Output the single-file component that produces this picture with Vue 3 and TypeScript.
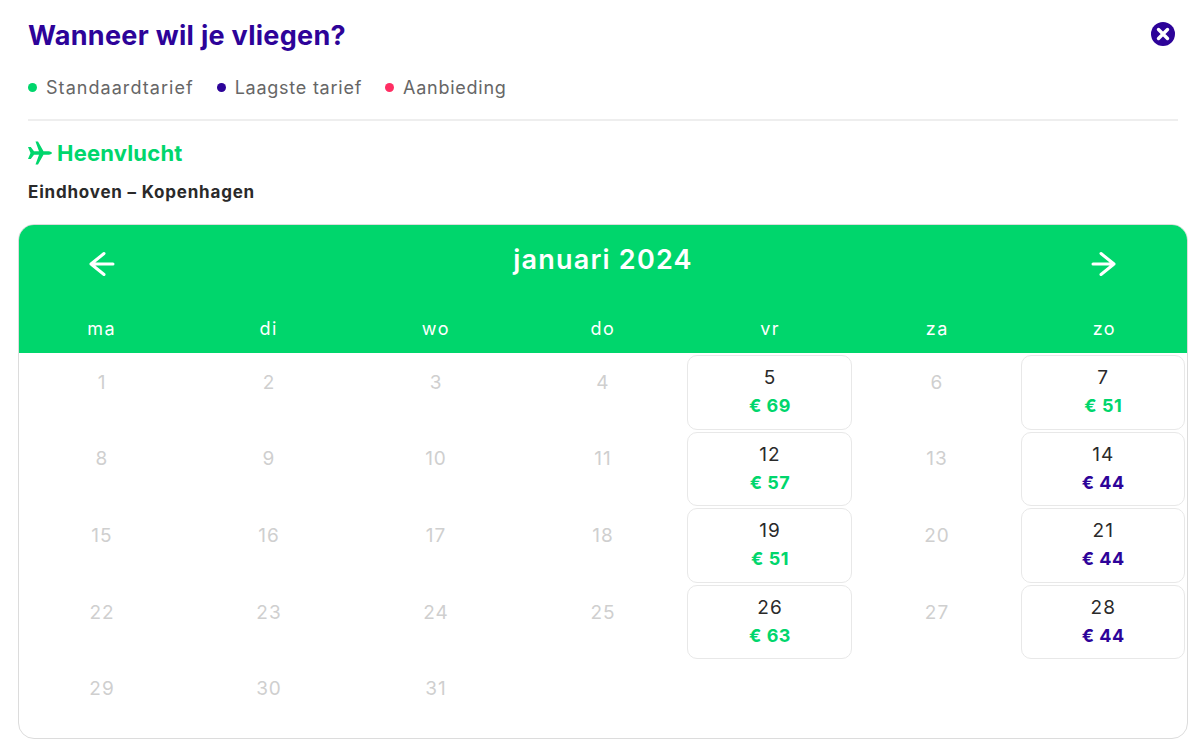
<script setup lang="ts">
interface Day {
  n: number
  price?: number
  low?: boolean
}

const weekdays = ['ma', 'di', 'wo', 'do', 'vr', 'za', 'zo']

const prices: Record<number, { price: number; low?: boolean }> = {
  5: { price: 69 },
  7: { price: 51 },
  12: { price: 57 },
  14: { price: 44, low: true },
  19: { price: 51 },
  21: { price: 44, low: true },
  26: { price: 63 },
  28: { price: 44, low: true },
}

const days: Day[] = Array.from({ length: 31 }, (_, i) => ({ n: i + 1, ...prices[i + 1] }))
</script>

<template>
  <div class="page">
    <div class="top">
      <h1>Wanneer wil je vliegen?</h1>
      <svg class="close" width="24" height="24" viewBox="0 0 24 24">
        <circle cx="12" cy="12" r="12" fill="#2d0399" />
        <path d="M7.5 7.5l9 9M16.5 7.5l-9 9" stroke="#fff" stroke-width="3.4" stroke-linecap="round" />
      </svg>
    </div>
    <div class="legend">
      <span class="item"><i class="dot green"></i>Standaardtarief</span>
      <span class="item"><i class="dot blue"></i>Laagste tarief</span>
      <span class="item"><i class="dot red"></i>Aanbieding</span>
    </div>
    <div class="direction">
      <svg width="24" height="24" viewBox="0 0 24 24" fill="#00d66c">
        <path d="M0 6 L2.800 6 L6 10.200 L11 10.200 L7.500 0.500 L10 0.500 L15.500 10.200 L21 10.200 Q24 10.800 24 12 Q24 13.200 21 13.800 L15.500 13.800 L10 23.500 L7.500 23.500 L11 13.800 L6 13.800 L2.800 18 L0 18 L2.500 12 Z" />
      </svg>
      <span>Heenvlucht</span>
    </div>
    <div class="route">Eindhoven – Kopenhagen</div>

    <div class="calendar">
      <div class="cal-head">
        <div class="month-row">
          <svg width="28" height="28" viewBox="0 0 28 28" fill="none" stroke="#fff" stroke-width="3" stroke-linecap="round" stroke-linejoin="round">
            <path d="M25 14H3M16 3.500L3 14l13 10.500" />
          </svg>
          <span class="month">januari 2024</span>
          <svg width="28" height="28" viewBox="0 0 28 28" fill="none" stroke="#fff" stroke-width="3" stroke-linecap="round" stroke-linejoin="round">
            <path d="M3 14h21M11 3.500L24 14 11 24.500" />
          </svg>
        </div>
        <div class="weekdays">
          <span v-for="w in weekdays" :key="w">{{ w }}</span>
        </div>
      </div>
      <div class="grid">
        <div v-for="d in days" :key="d.n" class="cell" :class="{ priced: d.price }">
          <span class="num">{{ d.n }}</span>
          <span v-if="d.price" class="price" :class="{ low: d.low }">€ {{ d.price }}</span>
        </div>
      </div>
    </div>
  </div>
</template>

<style scoped>
.page {
  width: 1200px;
  height: 756px;
  box-sizing: border-box;
  padding: 0 12px 0 18px;
  font-family: Inter, "Noto Sans", sans-serif;
  background: #fff;
  overflow: hidden;
}

.top {
  display: flex;
  justify-content: space-between;
  align-items: center;
  height: 71px;
  padding: 0 13px 0 10px;
}

h1 {
  margin: 0;
  font-size: 27px;
  font-weight: 700;
  letter-spacing: 0.3px;
  color: #2d0399;
}

.close {
  margin-bottom: 4px;
}

.legend {
  display: flex;
  gap: 23px;
  height: 48px;
  margin: 0 10px;
  border-bottom: 2px solid #eeeeee;
  font-size: 18px;
  letter-spacing: 0.75px;
  color: #666;
}

.item {
  display: flex;
  align-items: center;
  height: 32px;
}

.item:first-child {
  letter-spacing: 1.05px;
}

.dot {
  width: 9px;
  height: 9px;
  border-radius: 50%;
  margin-right: 9px;
}

.green { background: #00d66c; }
.blue { background: #2d0399; }
.red { background: #ff2e63; }

.direction {
  display: flex;
  align-items: center;
  gap: 5px;
  height: 38px;
  margin: 13px 0 0 10px;
  color: #00d66c;
  font-size: 22px;
  font-weight: 700;
  letter-spacing: 0.2px;
}

.route {
  margin: 8px 0 0 10px;
  height: 25px;
  line-height: 25px;
  font-size: 17px;
  font-weight: 700;
  letter-spacing: 0.8px;
  color: #2a2a2a;
}

.calendar {
  margin-top: 19px;
  width: 1170px;
  height: 515px;
  box-sizing: border-box;
  border: 1px solid #dcdcdc;
  border-radius: 16px;
  overflow: hidden;
}

.cal-head {
  height: 129px;
  margin: -1px -1px 0;
  background: #00d66c;
  color: #fff;
}

.month-row {
  display: flex;
  justify-content: space-between;
  align-items: center;
  height: 80px;
  padding: 0 70px;
}

.month {
  font-size: 27px;
  font-weight: 600;
  letter-spacing: 1.2px;
  margin-bottom: 10px;
}

.weekdays {
  display: grid;
  grid-template-columns: repeat(7, 1fr);
  text-align: center;
  font-size: 18px;
  letter-spacing: 1.5px;
  line-height: 50px;
}

.grid {
  display: grid;
  grid-template-columns: repeat(7, 167px);
  grid-auto-rows: 76.6px;
  padding-top: 1px;
  margin-left: -0.5px;
}

.cell {
  margin: 1px 1.5px 1px 0.5px;
  display: flex;
  flex-direction: column;
  align-items: center;
  justify-content: center;
  box-sizing: border-box;
  border: 1px solid transparent;
  border-radius: 10px;
  padding: 0 0 20px 1px;
  color: #cfcfcf;
  font-size: 19px;
  letter-spacing: 1px;
}

.cell:nth-child(7n) {
  margin-right: 3px;
}

.cell.priced {
  border-color: #e8e8e8;
  color: #2a2a2a;
  gap: 6px;
  padding-bottom: 2px;
}

.price {
  font-size: 18px;
  font-weight: 700;
  letter-spacing: 0.5px;
  color: #00d66c;
}

.price.low {
  color: #2d0399;
}
</style>

<style>
body {
  background: #fff;
}
</style>
